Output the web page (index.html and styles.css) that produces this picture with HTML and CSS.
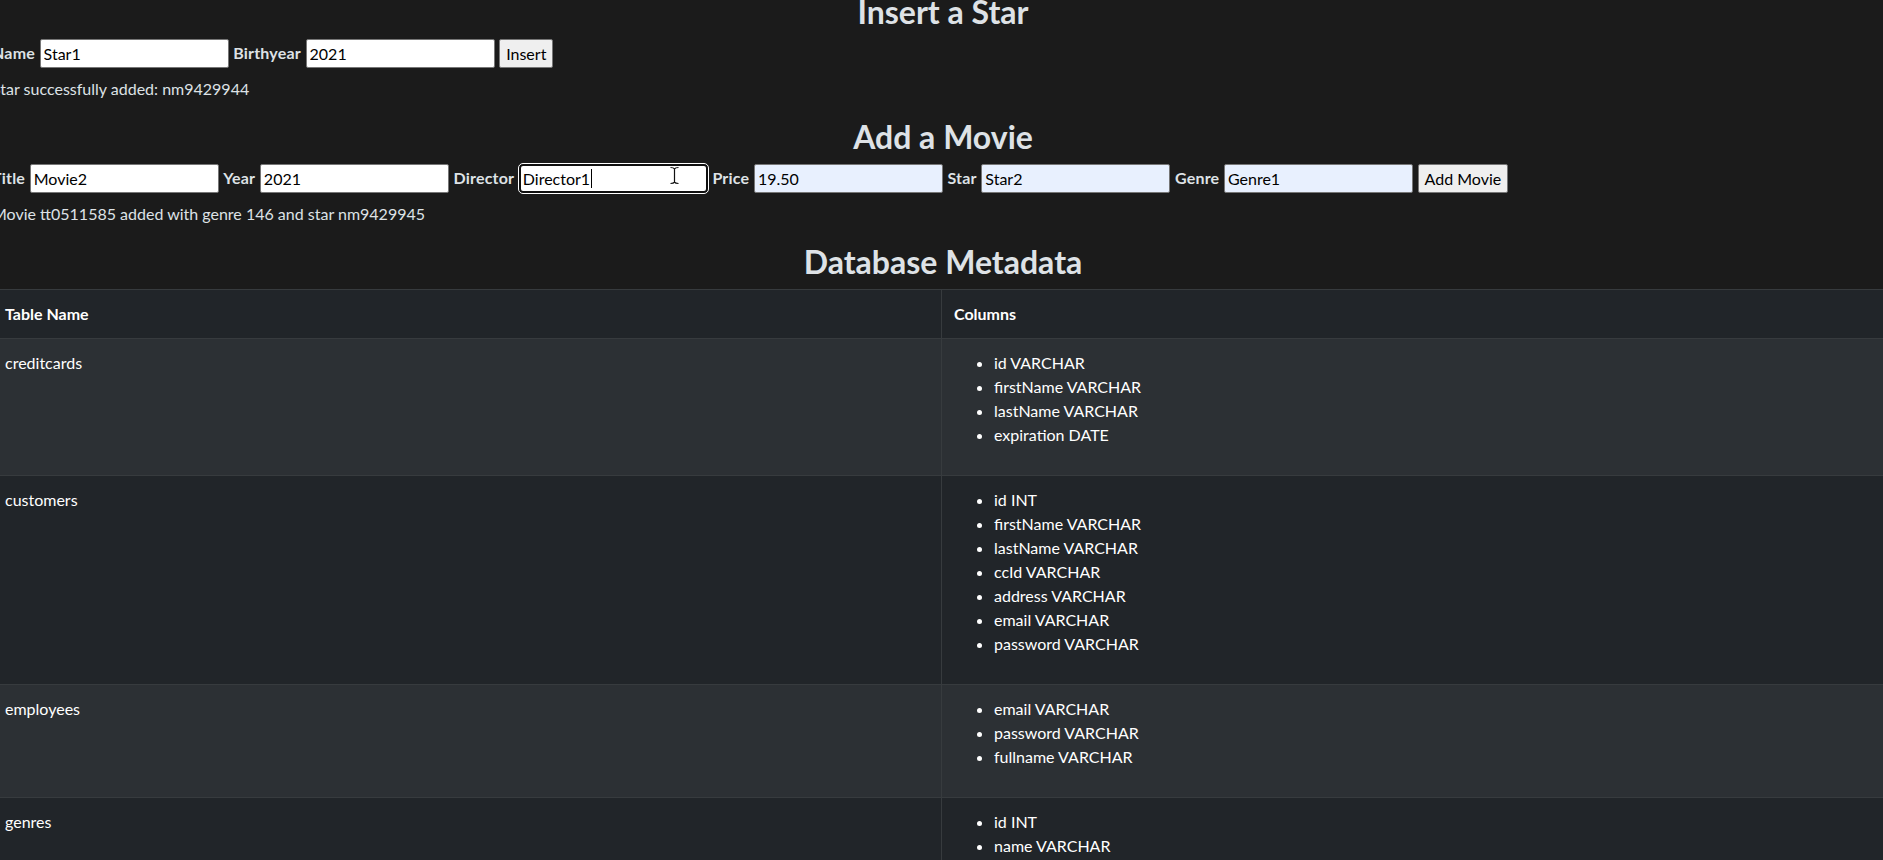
FILE: index.html
```html
<!DOCTYPE html>
<html lang="en">
<head>
<meta charset="utf-8">
<title>Employee Dashboard</title>
<link rel="stylesheet" href="styles.css">
</head>
<body>
<main class="page">
  <h2 class="section-title">Insert a Star</h2>
  <form class="form-row">
    <label class="field-label" for="star-name">Name</label>
    <input class="field" id="star-name" type="text" value="Star1">
    <label class="field-label" for="star-year">Birthyear</label>
    <input class="field" id="star-year" type="text" value="2021">
    <button class="btn" type="button">Insert</button>
  </form>
  <p class="status">Star successfully added: nm9429944</p>

  <h2 class="section-title">Add a Movie</h2>
  <form class="form-row">
    <label class="field-label" for="movie-title">Title</label>
    <input class="field" id="movie-title" type="text" value="Movie2">
    <label class="field-label" for="movie-year">Year</label>
    <input class="field" id="movie-year" type="text" value="2021">
    <label class="field-label">Director</label>
    <div class="focus-wrap">
      <div class="field field-focus" role="textbox">Director1<span class="caret"></span></div>
      <svg class="ibeam" width="11" height="19" viewBox="0 0 11 19" aria-hidden="true">
        <path d="M1.5 1.5c1.6 0 3.2 0 4 1.4c.8-1.4 2.4-1.4 4-1.4M5.5 3v13M1.5 17.5c1.6 0 3.2 0 4-1.4c.8 1.4 2.4 1.4 4 1.4" fill="none" stroke="#fff" stroke-width="3" stroke-linecap="round"/>
        <path d="M1.5 1.5c1.6 0 3.2 0 4 1.4c.8-1.4 2.4-1.4 4-1.4M5.5 3v13M1.5 17.5c1.6 0 3.2 0 4-1.4c.8 1.4 2.4 1.4 4 1.4" fill="none" stroke="#111" stroke-width="1.2"/>
      </svg>
    </div>
    <label class="field-label" for="movie-price">Price</label>
    <input class="field autofill" id="movie-price" type="text" value="19.50">
    <label class="field-label" for="movie-star">Star</label>
    <input class="field autofill" id="movie-star" type="text" value="Star2">
    <label class="field-label" for="movie-genre">Genre</label>
    <input class="field autofill" id="movie-genre" type="text" value="Genre1">
    <button class="btn" type="button">Add Movie</button>
  </form>
  <p class="status">Movie tt0511585 added with genre 146 and star nm9429945</p>

  <h2 class="section-title">Database Metadata</h2>
  <table class="meta">
    <colgroup><col class="col-name"><col></colgroup>
    <thead>
      <tr><th>Table Name</th><th>Columns</th></tr>
    </thead>
    <tbody>
      <tr>
        <td>creditcards</td>
        <td><ul><li>id VARCHAR</li><li>firstName VARCHAR</li><li>lastName VARCHAR</li><li>expiration DATE</li></ul></td>
      </tr>
      <tr>
        <td>customers</td>
        <td><ul><li>id INT</li><li>firstName VARCHAR</li><li>lastName VARCHAR</li><li>ccId VARCHAR</li><li>address VARCHAR</li><li>email VARCHAR</li><li>password VARCHAR</li></ul></td>
      </tr>
      <tr>
        <td>employees</td>
        <td><ul><li>email VARCHAR</li><li>password VARCHAR</li><li>fullname VARCHAR</li></ul></td>
      </tr>
      <tr>
        <td>genres</td>
        <td><ul><li>id INT</li><li>name VARCHAR</li></ul></td>
      </tr>
      <tr>
        <td>genres_in_movies</td>
        <td><ul><li>genreId INT</li><li>movieId VARCHAR</li></ul></td>
      </tr>
    </tbody>
  </table>
</main>
</body>
</html>
```

FILE: styles.css
```css
html, body {
  margin: 0;
  height: 100%;
  overflow: hidden;
  background: #1b1b1b;
}

body {
  font-family: Lato, "Segoe UI", "Noto Sans", sans-serif;
  font-size: 16px;
  line-height: 1.5;
  color: #dee2e6;
}

.page {
  width: 1902px;
  margin: -7.6px 0 0 -8px;
}

.section-title {
  margin: 0 0 7.5px;
  padding-top: 0.5px;
  font-size: 32px;
  font-weight: 700;
  line-height: 1.2;
  text-align: center;
  color: #dee2e6;
}

.form-row {
  display: flex;
  align-items: center;
  gap: 4.6px;
  height: 29px;
  margin: 0;
}

.field-label {
  font-weight: 700;
  letter-spacing: 0.2px;
  color: #dee2e6;
}

.field {
  box-sizing: border-box;
  width: 189px;
  height: 29px;
  margin: 0;
  padding: 1px 3px;
  border: 1px solid #767676;
  border-radius: 2px;
  background: #fff;
  color: #000;
  font: inherit;
  font-size: 16px;
  line-height: 25px;
}

.autofill {
  background: #e8f0fe;
}

.focus-wrap {
  position: relative;
  display: flex;
}

.field-focus {
  display: flex;
  align-items: center;
  padding: 0 2px;
  border: 2px solid #101010;
  border-radius: 4px;
  outline: 1px solid #fff;
  white-space: nowrap;
}

.caret {
  display: inline-block;
  width: 1px;
  height: 19px;
  margin-left: 1px;
  background: #000;
}

.ibeam {
  position: absolute;
  left: 150px;
  top: 2px;
}

.btn {
  box-sizing: border-box;
  height: 29px;
  margin: 0;
  padding: 1px 6px;
  border: 1px solid #767676;
  border-radius: 2px;
  background: #efefef;
  color: #000;
  font: inherit;
  font-size: 16px;
  line-height: 25px;
}

.status {
  margin: 9px 0 16.6px;
  line-height: 24px;
}

.meta {
  width: 100%;
  table-layout: fixed;
  border-collapse: collapse;
  color: #fff;
}

.col-name {
  width: 949px;
}

.meta th,
.meta td {
  padding: 12px;
  text-align: left;
  vertical-align: top;
  line-height: 24px;
  border: 1px solid #373b3e;
}

.meta thead th {
  background: #212529;
  font-weight: 700;
}

.meta tbody tr:nth-child(odd) td {
  background: #2c3034;
}

.meta tbody tr:nth-child(even) td {
  background: #212529;
}

.meta ul {
  margin: 0 0 16px;
  padding-left: 40px;
}
```
